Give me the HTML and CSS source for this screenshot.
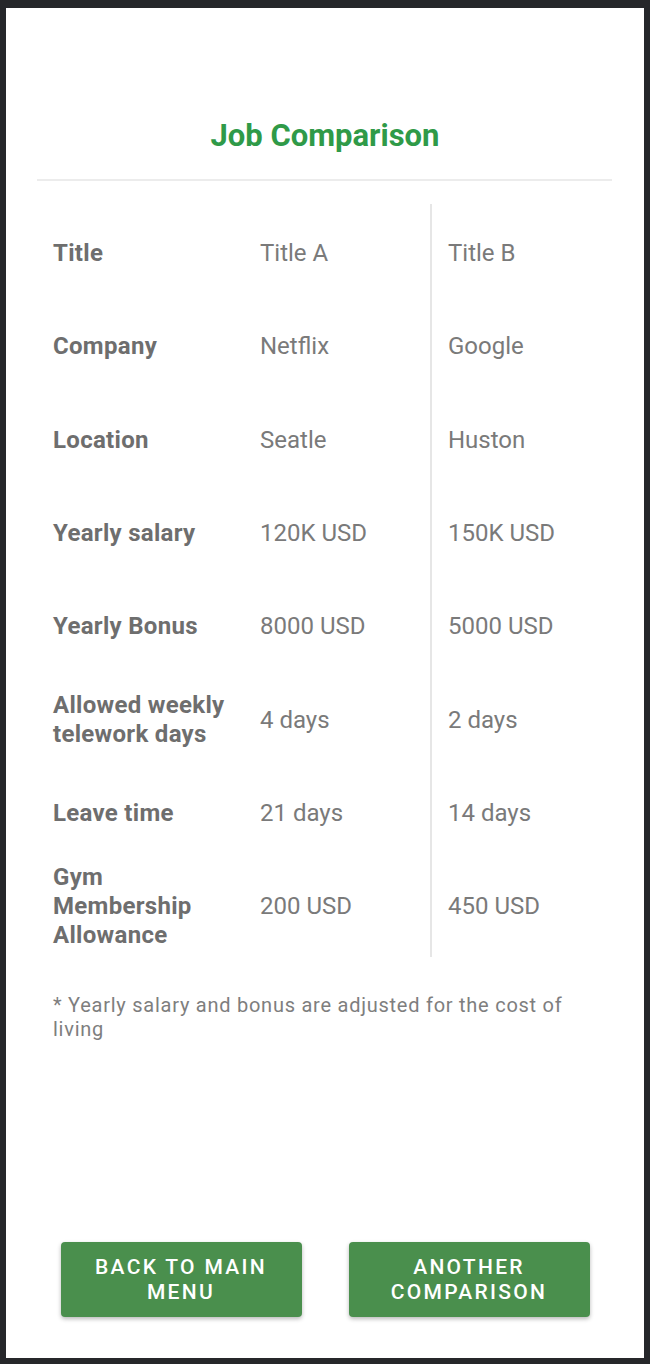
FILE: index.html
```html
<!DOCTYPE html>
<html lang="en">
<head>
<meta charset="utf-8">
<title>Job Comparison</title>
<link rel="stylesheet" href="styles.css">
</head>
<body>
<div class="screen">
  <h1 class="title">Job Comparison</h1>
  <div class="rule"></div>
  <div class="table">
    <div class="col labels">
      <div class="cell">Title</div>
      <div class="cell">Company</div>
      <div class="cell">Location</div>
      <div class="cell">Yearly salary</div>
      <div class="cell">Yearly Bonus</div>
      <div class="cell">Allowed weekly telework days</div>
      <div class="cell">Leave time</div>
      <div class="cell">Gym Membership Allowance</div>
    </div>
    <div class="col job-a">
      <div class="cell">Title A</div>
      <div class="cell">Netflix</div>
      <div class="cell">Seatle</div>
      <div class="cell">120K USD</div>
      <div class="cell">8000 USD</div>
      <div class="cell">4 days</div>
      <div class="cell">21 days</div>
      <div class="cell">200 USD</div>
    </div>
    <div class="col job-b">
      <div class="cell">Title B</div>
      <div class="cell">Google</div>
      <div class="cell">Huston</div>
      <div class="cell">150K USD</div>
      <div class="cell">5000 USD</div>
      <div class="cell">2 days</div>
      <div class="cell">14 days</div>
      <div class="cell">450 USD</div>
    </div>
  </div>
  <p class="note">* Yearly salary and bonus are adjusted for the cost of living</p>
  <div class="actions">
    <button class="btn">Back to main menu</button>
    <button class="btn">Another comparison</button>
  </div>
</div>
</body>
</html>
```

FILE: styles.css
```css
* { box-sizing: border-box; }

html, body {
  margin: 0;
  padding: 0;
  background: #26272a;
}

body {
  padding: 8px 6px 6px 6px;
  font-family: Roboto, "Noto Sans", "Liberation Sans", sans-serif;
}

.screen {
  background: #ffffff;
  height: 1350px;
  display: flex;
  flex-direction: column;
  padding-bottom: 41px;
}

.title {
  margin: 110px 0 0 0;
  text-align: center;
  font-size: 31px;
  font-weight: 700;
  line-height: 36px;
  color: #2f9a48;
}

.rule {
  margin: 25px 32px 0 31px;
  height: 2px;
  background: #ececec;
}

.table {
  display: flex;
  margin: 23px 0 0 47px;
  font-size: 24px;
}

.col {
  display: flex;
  flex-direction: column;
  padding: 3px 0 4px 0;
}

.cell {
  height: 93.3px;
  display: flex;
  align-items: center;
  line-height: 29px;
}

.labels {
  width: 207px;
  font-weight: 700;
  color: #6e6e6e;
  letter-spacing: 0.3px;
}

.labels .cell {
  padding-right: 20px;
}

.job-a {
  width: 170px;
  color: #7a7a7a;
}

.job-b {
  border-left: 2px solid #e6e6e6;
  padding-left: 16px;
  color: #7a7a7a;
}

.note {
  width: 545px;
  margin: 36px 0 0 47px;
  font-size: 20px;
  line-height: 24px;
  letter-spacing: 0.75px;
  color: #7e7e7e;
}

.actions {
  margin-top: auto;
  display: flex;
  justify-content: center;
  gap: 47px;
}

.btn {
  width: 241px;
  height: 75px;
  border: none;
  border-radius: 4px;
  background: #4a8f4d;
  color: #ffffff;
  font-family: Roboto, "Noto Sans", "Liberation Sans", sans-serif;
  font-size: 21px;
  font-weight: 500;
  line-height: 25px;
  letter-spacing: 2.3px;
  text-transform: uppercase;
  padding: 0 16px;
  box-shadow: 0 2px 4px rgba(0, 0, 0, 0.28);
}
```
